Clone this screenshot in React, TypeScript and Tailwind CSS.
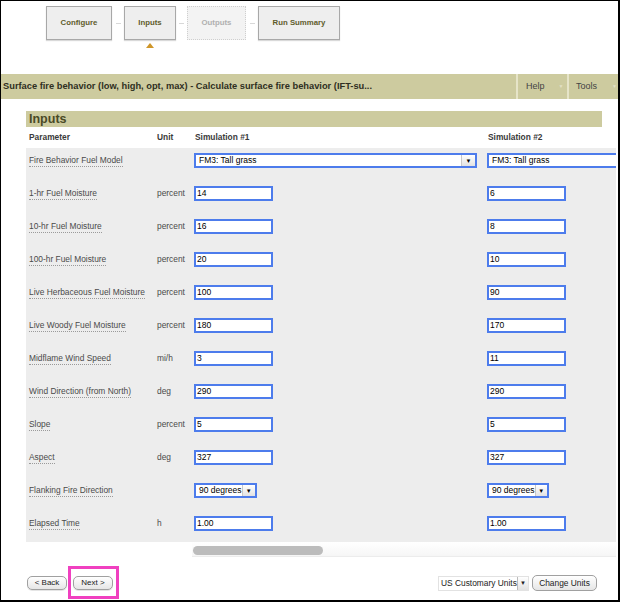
import React from "react";

const font = "font-['Liberation_Sans',Arial,sans-serif]";

function Inp({ v }: { v: string }) {
  return (
    <div className="h-[15px] w-[79px] border-2 border-[#4d7cec] bg-white pl-[1px] text-[8.5px] leading-[11px] text-black">
      {v}
    </div>
  );
}

function Sel({ v, w, full }: { v: string; w?: string; full?: boolean }) {
  return (
    <div
      className={`flex h-[15px] items-stretch border-2 border-[#4d7cec] bg-white text-[8.5px] leading-[11px] text-black ${
        full ? "w-[160px]" : w
      }`}
    >
      <div className="flex-1 whitespace-nowrap pl-[3px]">{v}</div>
      {!full && (
        <div className="flex w-[14px] items-center justify-center border-l border-[#c8c8c8] bg-gradient-to-b from-white to-[#e2e2e2] text-[6px] leading-none text-black">
          ▼
        </div>
      )}
    </div>
  );
}

type Row = { label: string; unit: string; a: React.ReactNode; b: React.ReactNode };

const rows: Row[] = [
  { label: "Fire Behavior Fuel Model", unit: "", a: <Sel v="FM3: Tall grass" w="w-[283px]" />, b: <Sel v="FM3: Tall grass" full /> },
  { label: "1-hr Fuel Moisture", unit: "percent", a: <Inp v="14" />, b: <Inp v="6" /> },
  { label: "10-hr Fuel Moisture", unit: "percent", a: <Inp v="16" />, b: <Inp v="8" /> },
  { label: "100-hr Fuel Moisture", unit: "percent", a: <Inp v="20" />, b: <Inp v="10" /> },
  { label: "Live Herbaceous Fuel Moisture", unit: "percent", a: <Inp v="100" />, b: <Inp v="90" /> },
  { label: "Live Woody Fuel Moisture", unit: "percent", a: <Inp v="180" />, b: <Inp v="170" /> },
  { label: "Midflame Wind Speed", unit: "mi/h", a: <Inp v="3" />, b: <Inp v="11" /> },
  { label: "Wind Direction (from North)", unit: "deg", a: <Inp v="290" />, b: <Inp v="290" /> },
  { label: "Slope", unit: "percent", a: <Inp v="5" />, b: <Inp v="5" /> },
  { label: "Aspect", unit: "deg", a: <Inp v="327" />, b: <Inp v="327" /> },
  { label: "Flanking Fire Direction", unit: "", a: <Sel v="90 degrees" w="w-[63px]" />, b: <Sel v="90 degrees" w="w-[62px]" /> },
  { label: "Elapsed Time", unit: "h", a: <Inp v="1.00" />, b: <Inp v="1.00" /> },
];

function Step({ label, w, active, faded }: { label: string; w: string; active?: boolean; faded?: boolean }) {
  return (
    <div className={`relative ${w}`}>
      <div
        className={`flex h-[34px] items-center justify-center text-[7.8px] font-bold ${
          faded
            ? "border border-dotted border-[#cfcfcf] bg-[#f3f3f3] text-[#b0b0b0]"
            : "border border-[#a8a8a8] bg-[#eeeeee] text-[#5f5c2c] shadow-[0_1px_1px_rgba(0,0,0,0.15)]"
        }`}
      >
        {label}
      </div>
      {active && (
        <div className="absolute left-1/2 top-[37px] h-0 w-0 -translate-x-1/2 border-x-[4px] border-b-[5px] border-x-transparent border-b-[#cf962a]" />
      )}
    </div>
  );
}

function Conn({ w }: { w: string }) {
  return (
    <div className={`flex h-[34px] ${w} items-center justify-center`}>
      <div className="h-px w-[5px] bg-[#d8d8d8]" />
    </div>
  );
}

function Btn({ children, w }: { children: React.ReactNode; w: string }) {
  return (
    <div
      className={`flex h-[14px] ${w} items-center justify-center rounded-[5px] border border-[#a0a0a0] bg-gradient-to-b from-white to-[#e6e6e6] text-[8px] text-[#222] shadow-[0_1px_0_rgba(0,0,0,0.1)]`}
    >
      {children}
    </div>
  );
}

export default function App() {
  return (
    <div
      className={`relative flex h-[602px] w-[620px] flex-col overflow-hidden border-b-2 border-l border-r-2 border-t border-black bg-white ${font}`}
    >
      {/* steps */}
      <div className="flex h-[73px] items-start pl-[45px] pt-[5px]">
        <Step label="Configure" w="w-[66px]" />
        <Conn w="w-[12px]" />
        <Step label="Inputs" w="w-[52px]" active />
        <Conn w="w-[11px]" />
        <Step label="Outputs" w="w-[59px]" faded />
        <Conn w="w-[12px]" />
        <Step label="Run Summary" w="w-[82px]" />
      </div>

      {/* title bar */}
      <div className="flex h-[25px] items-stretch bg-[#cdcb9f] text-[9px]">
        <div className="flex flex-1 items-center overflow-hidden whitespace-nowrap pl-[2px] text-[9.3px] font-bold text-[#2f2f22]">
          Surface fire behavior (low, high, opt, max) - Calculate surface fire behavior (IFT-su...
        </div>
        <div className="flex w-[51px] items-center border-l-2 border-[#e6e4c8] pl-[8px] text-[#444]">
          Help<span className="ml-[14px] text-[5px] text-[#e3e1c6]">▼</span>
        </div>
        <div className="flex w-[51px] items-center border-l-2 border-[#e6e4c8] pl-[7px] text-[#444]">
          Tools<span className="ml-[15px] text-[5px] text-[#e3e1c6]">▼</span>
        </div>
      </div>

      {/* content */}
      <div className="ml-[25px] mr-[2px] mt-[12px] flex flex-col">
        <div className="mr-[14px] flex h-[16px] items-center bg-[#cdcb9f] pl-[3px] text-[12.5px] font-bold text-[#4a4a26]">
          Inputs
        </div>
        <div className="flex h-[21px] items-center text-[8.4px] font-bold text-[#3a3a3a]">
          <div className="w-[131px] pl-[3px]">Parameter</div>
          <div className="w-[37px]">Unit</div>
          <div className="w-[293px] pl-px">Simulation #1</div>
          <div className="flex-1 pl-px">Simulation #2</div>
        </div>
        <div className="flex flex-col gap-[18px] bg-[#ededed] pb-[11px] pt-[5px]">
          {rows.map((r) => (
            <div key={r.label} className="flex h-[15px] items-center text-[8.4px] text-[#4a4a4a]">
              <div className="w-[131px] pl-[3px]">
                <span className="border-b border-dotted border-[#9a9a9a] pb-px">{r.label}</span>
              </div>
              <div className="w-[37px]">{r.unit}</div>
              <div className="w-[293px]">{r.a}</div>
              <div className="flex-1 overflow-hidden">{r.b}</div>
            </div>
          ))}
        </div>
        {/* scrollbar */}
        <div className="flex h-[15px]">
          <div className="w-[166px] bg-white" />
          <div className="flex-1 border-b border-[#ececec] bg-gradient-to-b from-white to-[#f6f6f6] pl-px pt-[4px]">
            <div className="h-[9px] w-[130px] rounded-full bg-[#bcbcbc]" />
          </div>
        </div>
      </div>

      {/* bottom */}
      <div className="mt-[18px] flex items-center pl-[26px] pr-[21px]">
        <Btn w="w-[40px]">&lt; Back</Btn>
        <div className="ml-[6px]">
          <Btn w="w-[40px]">Next &gt;</Btn>
        </div>
        <div className="flex-1" />
        <div className="flex h-[15px] w-[91px] items-stretch border border-[#e2e2e2] bg-white text-[8.4px] text-[#222]">
          <div className="flex flex-1 items-center whitespace-nowrap pl-[2px]">US Customary Units</div>
          <div className="flex w-[14px] items-center justify-center border-l border-[#bbb] bg-gradient-to-b from-white to-[#e2e2e2] text-[6px]">
            ▼
          </div>
        </div>
        <div className="ml-[3px]">
          <div className="flex h-[16px] w-[65px] items-center justify-center rounded-[5px] border border-[#a0a0a0] bg-gradient-to-b from-white to-[#e6e6e6] text-[8.4px] text-[#222]">
            Change Units
          </div>
        </div>
      </div>

      {/* annotation highlight */}
      <div className="pointer-events-none absolute left-[67px] top-[565px] h-[33px] w-[51px] border-[3px] border-[#f040c0]" />
    </div>
  );
}
